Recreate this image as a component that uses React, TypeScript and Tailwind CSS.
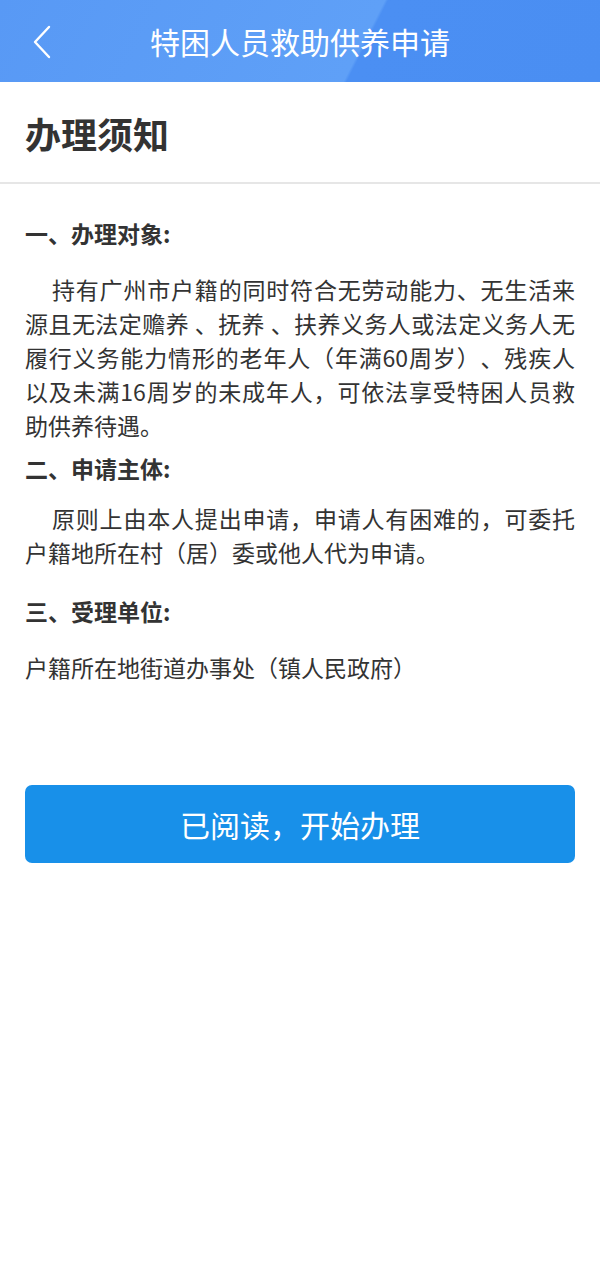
import React from "react";

const font = { fontFamily: '"Noto Sans CJK SC", "Noto Sans", sans-serif' };

export default function App() {
  return (
    <div className="w-[600px] min-h-[1266px] bg-white text-[#333333] [text-spacing-trim:space-all]" style={font}>
      <header className="relative h-[82px] flex items-center justify-center bg-[linear-gradient(117deg,#5899f5_0%,#5fa0f7_60%,#4b8ff3_60.5%,#4a8ef2_100%)]">
        <div className="absolute left-[30px] top-[24px]">
          <svg width="24" height="36" viewBox="0 0 24 36" fill="none">
            <path d="M19 3 L5 18 L19 33" stroke="white" strokeWidth="2.4" strokeLinecap="round" strokeLinejoin="round" />
          </svg>
        </div>
        <h1 className="text-[30px] leading-none text-white">特困人员救助供养申请</h1>
      </header>
      <div className="h-[100px] flex items-center px-[25px] pt-[1px]">
        <h2 className="text-[36px] font-bold leading-none text-[#333333]">办理须知</h2>
      </div>
      <div className="h-[2px] bg-[#e6e6e6]" />
      <main className="px-[25px] pt-[32px]">
        <h3 className="text-[23px] font-bold leading-[34px]">一、办理对象:</h3>
        <p className="mt-[22px] text-[23px] leading-[34px] text-justify indent-[27px]">
          持有广州市户籍的同时符合无劳动能力、无生活来源且无法定赡养 、抚养 、扶养义务人或法定义务人无履行义务能力情形的老年人（年满60周岁）、残疾人以及未满16周岁的未成年人，可依法享受特困人员救助供养待遇。
        </p>
        <h3 className="mt-[9px] text-[23px] font-bold leading-[34px]">二、申请主体:</h3>
        <p className="mt-[16px] text-[23px] leading-[34px] text-justify indent-[27px]">
          原则上由本人提出申请，申请人有困难的，可委托户籍地所在村（居）委或他人代为申请。
        </p>
        <h3 className="mt-[25px] text-[23px] font-bold leading-[34px]">三、受理单位:</h3>
        <p className="mt-[22px] text-[23px] leading-[34px]">户籍所在地街道办事处（镇人民政府）</p>
        <button className="mt-[101px] w-full h-[78px] rounded-[7px] bg-[#1890e9] text-white text-[30px] leading-none">
          已阅读，开始办理
        </button>
      </main>
    </div>
  );
}
